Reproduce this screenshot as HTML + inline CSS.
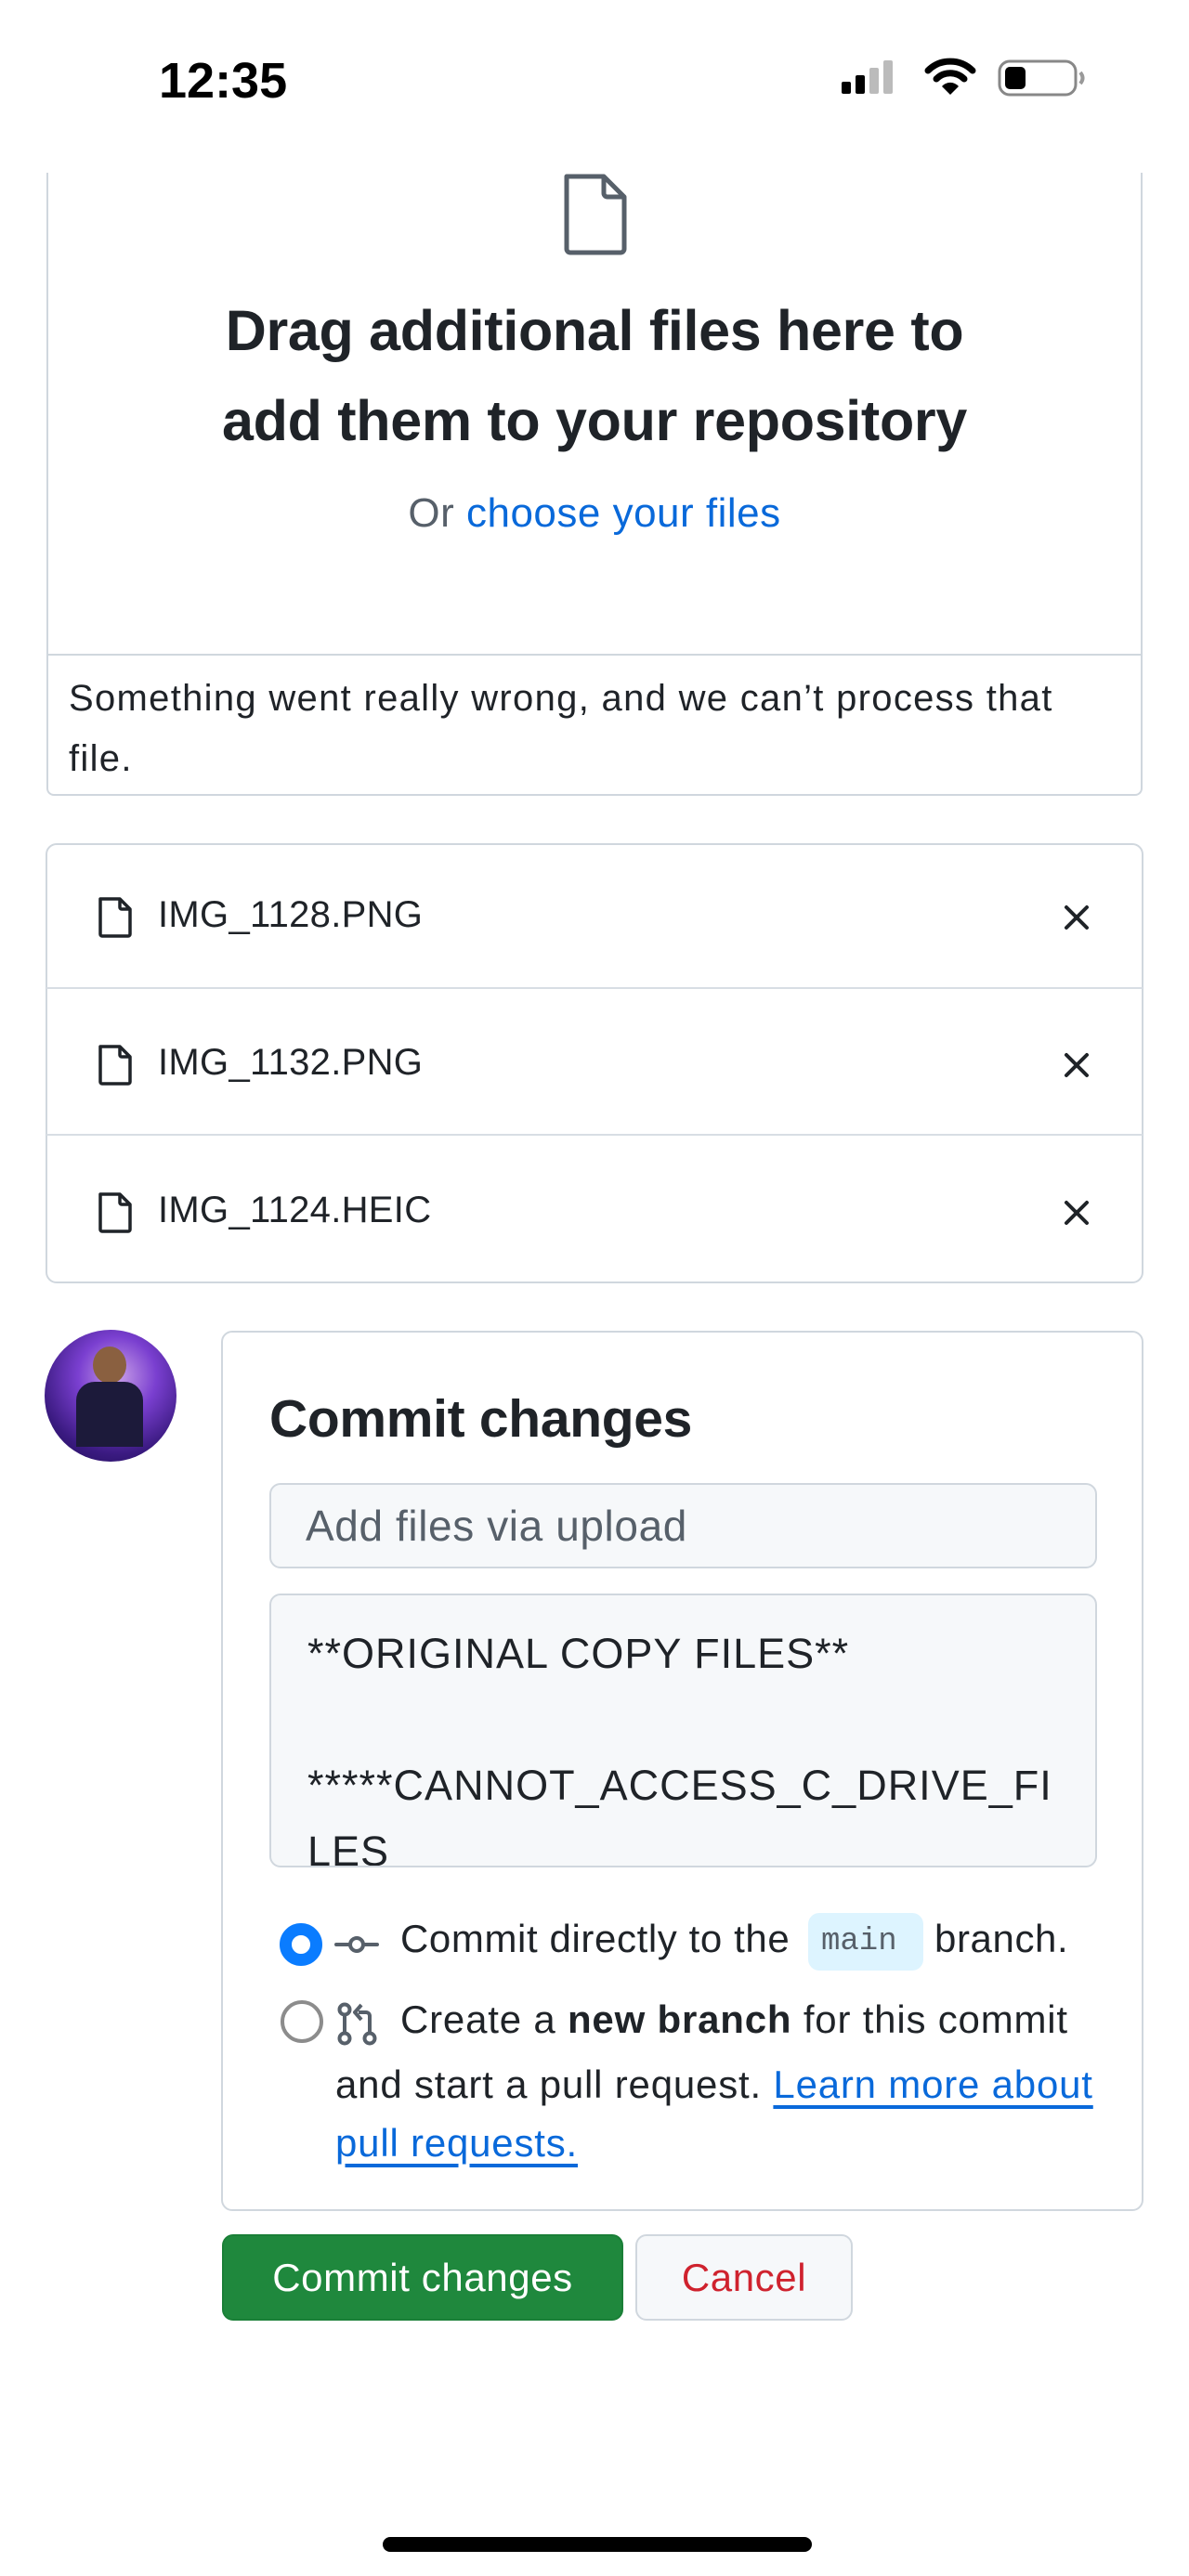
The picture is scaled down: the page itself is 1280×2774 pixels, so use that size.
<!DOCTYPE html>
<html><head><meta charset="utf-8"><style>
*{margin:0;padding:0;box-sizing:border-box}
body{width:1280px;height:2774px;background:#fff;position:relative;overflow:hidden;font-family:"Liberation Sans",sans-serif;color:#1f2328}
.a{position:absolute;white-space:nowrap}
.card{position:absolute;border:2px solid #d0d7de;border-radius:12px;background:#fff}
</style></head><body>
<div class="a" style="left:171px;top:56px;font-size:54px;font-weight:bold;color:#000">12:35</div>
<svg class="a" style="left:906px;top:64px" width="72" height="42"><rect x="0" y="24" width="10" height="13" rx="2" fill="#000"/><rect x="15" y="17" width="10" height="20" rx="2" fill="#000"/><rect x="30" y="9" width="10" height="28" rx="2" fill="#bbb"/><rect x="45" y="1" width="10" height="36" rx="2" fill="#bbb"/></svg>
<svg class="a" style="left:995px;top:62px" width="56" height="42" viewBox="0 0 56 42"><path d="M4 14 A34 34 0 0 1 52 14" stroke="#000" stroke-width="7" fill="none" stroke-linecap="round"/><path d="M13 23 A21 21 0 0 1 43 23" stroke="#000" stroke-width="7" fill="none" stroke-linecap="round"/><path d="M28 40 L19 31 A12 12 0 0 1 37 31 Z" fill="#000"/></svg>
<svg class="a" style="left:1074px;top:64px" width="96" height="42"><rect x="2" y="2" width="82" height="36" rx="11" fill="none" stroke="#888" stroke-width="3"/><rect x="8" y="8" width="22" height="24" rx="5" fill="#000"/><path d="M89 14 q5 6 0 12" stroke="#999" stroke-width="4" fill="none"/></svg>

<div class="a" style="left:50px;top:186px;width:1180px;height:671px;border:2px solid #d0d7de;border-top:none;border-radius:0 0 8px 8px"></div>
<div class="a" style="left:50px;top:704px;width:1180px;height:2px;background:#d0d7de"></div>
<svg class="a" style="left:604px;top:186px" width="72" height="90" viewBox="0 0 72 90"><path d="M6 4 H46 L68 26 V82 a4 4 0 0 1 -4 4 H10 a4 4 0 0 1 -4 -4 Z M46 4 V22 a4 4 0 0 0 4 4 H68" fill="none" stroke="#57606a" stroke-width="5" stroke-linejoin="round"/></svg>
<div class="a" style="left:0;width:1280px;text-align:center;top:308px;font-size:61px;font-weight:bold;line-height:97px;letter-spacing:-0.3px">Drag additional files here to<br>add them to your repository</div>
<div class="a" style="left:0;width:1280px;text-align:center;top:528px;font-size:44px;color:#57606a;letter-spacing:0.5px">Or <span style="color:#0969da">choose your files</span></div>
<div class="a" style="left:74px;top:720px;font-size:40px;letter-spacing:1.3px;line-height:65px;color:#1f2328">Something went really wrong, and we can’t process that<br>file.</div>

<div class="card" style="left:49px;top:908px;width:1182px;height:474px"></div>
<div class="a" style="left:50px;top:1063px;width:1180px;height:2px;background:#d8dee4"></div>
<div class="a" style="left:50px;top:1221px;width:1180px;height:2px;background:#d8dee4"></div>
<svg class="a" style="left:104px;top:965px" width="40" height="46" viewBox="0 0 40 46"><path d="M4 3 H25 L36 14 V41 a2 2 0 0 1 -2 2 H6 a2 2 0 0 1 -2 -2 Z M25 3 V12 a2 2 0 0 0 2 2 H36" fill="none" stroke="#1f2328" stroke-width="3.5" stroke-linejoin="round"/></svg>
<svg class="a" style="left:104px;top:1124px" width="40" height="46" viewBox="0 0 40 46"><path d="M4 3 H25 L36 14 V41 a2 2 0 0 1 -2 2 H6 a2 2 0 0 1 -2 -2 Z M25 3 V12 a2 2 0 0 0 2 2 H36" fill="none" stroke="#1f2328" stroke-width="3.5" stroke-linejoin="round"/></svg>
<svg class="a" style="left:104px;top:1283px" width="40" height="46" viewBox="0 0 40 46"><path d="M4 3 H25 L36 14 V41 a2 2 0 0 1 -2 2 H6 a2 2 0 0 1 -2 -2 Z M25 3 V12 a2 2 0 0 0 2 2 H36" fill="none" stroke="#1f2328" stroke-width="3.5" stroke-linejoin="round"/></svg>
<div class="a" style="left:170px;top:963px;font-size:40px;letter-spacing:0.3px">IMG_1128.PNG</div>
<div class="a" style="left:170px;top:1122px;font-size:40px;letter-spacing:0.3px">IMG_1132.PNG</div>
<div class="a" style="left:170px;top:1281px;font-size:40px;letter-spacing:0.3px">IMG_1124.HEIC</div>
<svg class="a" style="left:1145px;top:974px" width="28" height="28"><path d="M3 3 L25 25 M25 3 L3 25" stroke="#1f2328" stroke-width="4" stroke-linecap="round"/></svg>
<svg class="a" style="left:1145px;top:1133px" width="28" height="28"><path d="M3 3 L25 25 M25 3 L3 25" stroke="#1f2328" stroke-width="4" stroke-linecap="round"/></svg>
<svg class="a" style="left:1145px;top:1292px" width="28" height="28"><path d="M3 3 L25 25 M25 3 L3 25" stroke="#1f2328" stroke-width="4" stroke-linecap="round"/></svg>

<div class="a" style="left:48px;top:1432px;width:142px;height:142px;border-radius:50%;background:radial-gradient(circle at 55% 35%,#c9a0e8 0%,#7a3fd0 35%,#3a1a80 70%,#1c0c50 100%)"></div>
<div class="a" style="left:100px;top:1450px;width:36px;height:40px;border-radius:50%;background:#8a6040"></div>
<div class="a" style="left:82px;top:1488px;width:72px;height:70px;border-radius:20px 20px 0 0;background:#1c1a3a"></div>

<div class="card" style="left:238px;top:1433px;width:993px;height:948px"></div>
<div class="a" style="left:290px;top:1495px;font-size:57px;font-weight:bold;letter-spacing:-0.3px">Commit changes</div>
<div class="a" style="left:290px;top:1597px;width:891px;height:92px;border:2px solid #d0d7de;border-radius:12px;background:#f6f8fa"></div>
<div class="a" style="left:329px;top:1616px;font-size:46px;letter-spacing:0.6px;color:#57606a">Add files via upload</div>
<div class="a" style="left:290px;top:1716px;width:891px;height:295px;border:2px solid #d0d7de;border-radius:12px;background:#f6f8fa;overflow:hidden">
<div style="position:absolute;left:39px;top:27px;font-size:45px;letter-spacing:1px;line-height:71px;white-space:nowrap">**ORIGINAL COPY FILES**<br><br>*****CANNOT_ACCESS_C_DRIVE_FI<br>LES</div></div>

<div class="a" style="left:301px;top:2071px;width:46px;height:46px;border-radius:50%;border:13px solid #0a7cff;background:#fff"></div>
<svg class="a" style="left:360px;top:2080px" width="48" height="28"><circle cx="24" cy="14" r="7" fill="none" stroke="#57606a" stroke-width="4"/><path d="M2 14 H17 M31 14 H46" stroke="#57606a" stroke-width="4" stroke-linecap="round"/></svg>
<div class="a" style="left:431px;top:2064px;font-size:42px;letter-spacing:0.6px">Commit directly to the</div>
<div class="a" style="left:870px;top:2060px;width:124px;height:62px;border-radius:12px;background:#ddf4ff"></div>
<div class="a" style="left:884px;top:2072px;font-family:'Liberation Mono',monospace;font-size:34px;color:#57606a">main</div>
<div class="a" style="left:1006px;top:2064px;font-size:42px;letter-spacing:0.6px">branch.</div>

<div class="a" style="left:302px;top:2154px;width:46px;height:46px;border-radius:50%;border:4px solid #8c8c8c;background:#fff"></div>
<svg class="a" style="left:362px;top:2155px" width="46" height="48" viewBox="0 0 46 48"><circle cx="9" cy="9" r="5.5" fill="none" stroke="#57606a" stroke-width="4"/><circle cx="9" cy="40" r="5.5" fill="none" stroke="#57606a" stroke-width="4"/><circle cx="36" cy="40" r="5.5" fill="none" stroke="#57606a" stroke-width="4"/><path d="M9 15 V34 M36 34 V16 a4 4 0 0 0 -4 -4 H24" stroke="#57606a" stroke-width="4" fill="none"/><path d="M27 4 L20 12 L27 20" stroke="#57606a" stroke-width="4" fill="none" stroke-linejoin="round"/></svg>
<div class="a" style="left:431px;top:2151px;font-size:42px;letter-spacing:0.8px">Create a <b>new branch</b> for this commit</div>
<div class="a" style="left:361px;top:2213px;font-size:42px;letter-spacing:0.8px;line-height:63px">and start a pull request. <span style="color:#0969da;text-decoration:underline;text-underline-offset:8px">Learn more about</span><br><span style="color:#0969da;text-decoration:underline;text-underline-offset:8px">pull requests.</span></div>

<div class="a" style="left:239px;top:2406px;width:432px;height:93px;border-radius:12px;background:#1f883d;border:2px solid #1a7f37;color:#fff;font-size:42px;letter-spacing:0.6px;text-align:center;line-height:89px">Commit changes</div>
<div class="a" style="left:684px;top:2406px;width:234px;height:93px;border-radius:12px;background:#f6f8fa;border:2px solid #d0d7de;color:#cf222e;font-size:42px;letter-spacing:0.6px;text-align:center;line-height:89px">Cancel</div>

<div class="a" style="left:412px;top:2732px;width:462px;height:16px;border-radius:8px;background:#000"></div>
</body></html>
